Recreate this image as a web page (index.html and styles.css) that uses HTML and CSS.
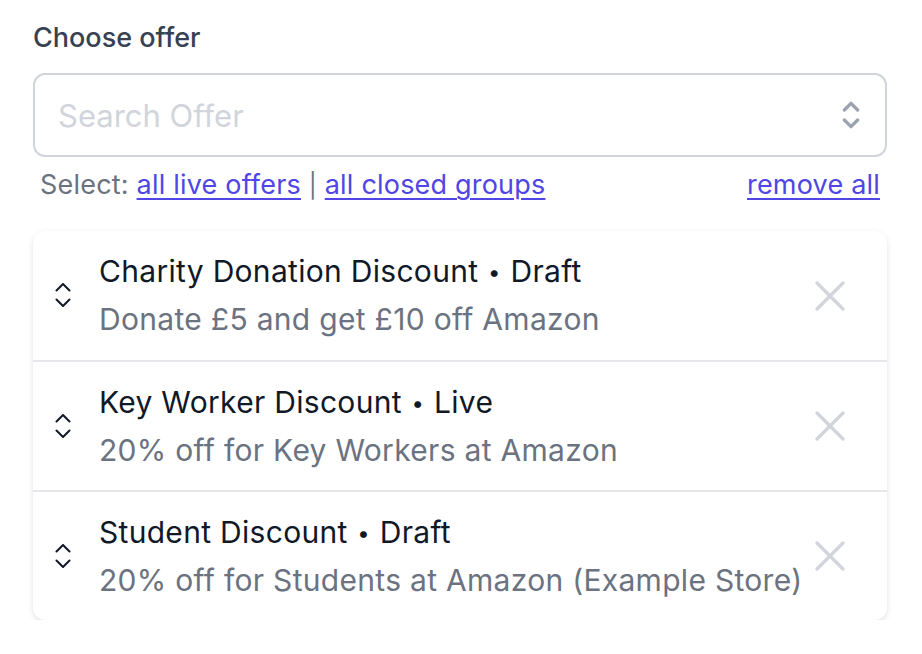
FILE: index.html
```html
<!DOCTYPE html>
<html lang="en">
<head>
<meta charset="utf-8">
<title>Choose offer</title>
<link rel="stylesheet" href="styles.css">
</head>
<body>
<main class="field">
  <label class="label" for="offer-search">Choose offer</label>
  <div class="combo">
    <input id="offer-search" class="combo-input" type="text" placeholder="Search Offer">
    <svg class="combo-icon" width="40" height="40" viewBox="0 0 24 24" fill="none" stroke="currentColor" stroke-width="2" stroke-linecap="round" stroke-linejoin="round"><path d="M8 9l4-4 4 4m0 6l-4 4-4-4"/></svg>
  </div>
  <div class="select-row">
    <div class="select-left">Select: <a href="#">all live offers</a> <span class="pipe">|</span> <a href="#">all closed groups</a></div>
    <a href="#">remove all</a>
  </div>
  <ul class="offer-list">
    <li class="offer">
      <svg class="drag" width="16" height="24" viewBox="0 0 16 24" fill="none" stroke="currentColor" stroke-width="2" stroke-linecap="round" stroke-linejoin="round"><path d="M1.5 7.5L8 1l6.5 6.5M1.5 16.5L8 23l6.5-6.5"/></svg>
      <div class="offer-text">
        <div class="offer-title">Charity Donation Discount <span class="dot">•</span> Draft</div>
        <div class="offer-sub">Donate £5 and get £10 off Amazon</div>
      </div>
      <svg class="remove" width="30" height="30" viewBox="0 0 30 30" fill="none" stroke="currentColor" stroke-width="3.2" stroke-linecap="round"><path d="M2 2l26 26M28 2L2 28"/></svg>
    </li>
    <li class="offer">
      <svg class="drag" width="16" height="24" viewBox="0 0 16 24" fill="none" stroke="currentColor" stroke-width="2" stroke-linecap="round" stroke-linejoin="round"><path d="M1.5 7.5L8 1l6.5 6.5M1.5 16.5L8 23l6.5-6.5"/></svg>
      <div class="offer-text">
        <div class="offer-title">Key Worker Discount <span class="dot">•</span> Live</div>
        <div class="offer-sub">20% off for Key Workers at Amazon</div>
      </div>
      <svg class="remove" width="30" height="30" viewBox="0 0 30 30" fill="none" stroke="currentColor" stroke-width="3.2" stroke-linecap="round"><path d="M2 2l26 26M28 2L2 28"/></svg>
    </li>
    <li class="offer">
      <svg class="drag" width="16" height="24" viewBox="0 0 16 24" fill="none" stroke="currentColor" stroke-width="2" stroke-linecap="round" stroke-linejoin="round"><path d="M1.5 7.5L8 1l6.5 6.5M1.5 16.5L8 23l6.5-6.5"/></svg>
      <div class="offer-text">
        <div class="offer-title">Student Discount <span class="dot">•</span> Draft</div>
        <div class="offer-sub">20% off for Students at Amazon (Example Store)</div>
      </div>
      <svg class="remove" width="30" height="30" viewBox="0 0 30 30" fill="none" stroke="currentColor" stroke-width="3.2" stroke-linecap="round"><path d="M2 2l26 26M28 2L2 28"/></svg>
    </li>
  </ul>
</main>
</body>
</html>
```

FILE: styles.css
```css
* { box-sizing: border-box; }
html, body { margin: 0; padding: 0; background: #ffffff; }
body {
  font-family: Inter, "Noto Sans", "Liberation Sans", sans-serif;
  -webkit-font-smoothing: antialiased;
}
.field {
  width: 854px;
  margin-left: 33px;
  padding-top: 18px;
  display: flex;
  flex-direction: column;
}
.label {
  display: block;
  font-size: 27px;
  line-height: 40px;
  font-weight: 500;
  color: #374151;
}
.combo {
  margin-top: 15px;
  position: relative;
  height: 84px;
  border: 2px solid #d1d5db;
  border-radius: 12px;
  display: flex;
  align-items: center;
}
.combo-input {
  flex: 1;
  height: 100%;
  border: 0;
  outline: none;
  background: transparent;
  padding: 0 70px 0 23px;
  font-family: inherit;
  font-size: 31px;
  color: #111827;
}
.combo-input::placeholder { color: #d1d5db; opacity: 1; }
.combo-icon {
  color: #9ca3af;
  margin-right: 14px;
  flex: none;
}
.select-row {
  margin-top: 8px;
  padding: 0 7px;
  display: flex;
  justify-content: space-between;
  font-size: 27px;
  letter-spacing: 0.2px;
  line-height: 40px;
  color: #6b7280;
}
.pipe { font-size: 24px; }
.select-row a {
  color: #4f46e5;
  text-decoration: underline;
  text-decoration-thickness: 2px;
  text-underline-offset: 4px;
}
.offer-list {
  list-style: none;
  margin: 25px 0 0;
  padding: 0;
  border-radius: 12px;
  background: #ffffff;
  box-shadow: 0 2px 6px rgba(0,0,0,0.10), 0 2px 4px -2px rgba(0,0,0,0.08);
}
.offer {
  display: flex;
  align-items: center;
  height: 130px;
  padding: 0 42px 0 22px;
  border-top: 2px solid #e5e7eb;
}
.offer:first-child { border-top: 0; height: 129px; }
.drag { color: #111827; flex: none; margin-top: -1px; }
.offer-text {
  flex: 1;
  margin-left: 28px;
}
.offer-title,
.offer-sub {
  font-size: 30px;
  letter-spacing: 0.3px;
  line-height: 47px;
}
.offer-title { color: #111827; }
.offer-sub { color: #6b7280; }
.dot { font-size: 22px; margin: 0 1px; vertical-align: 2px; }
.remove { color: #d1d5db; flex: none; }
```
